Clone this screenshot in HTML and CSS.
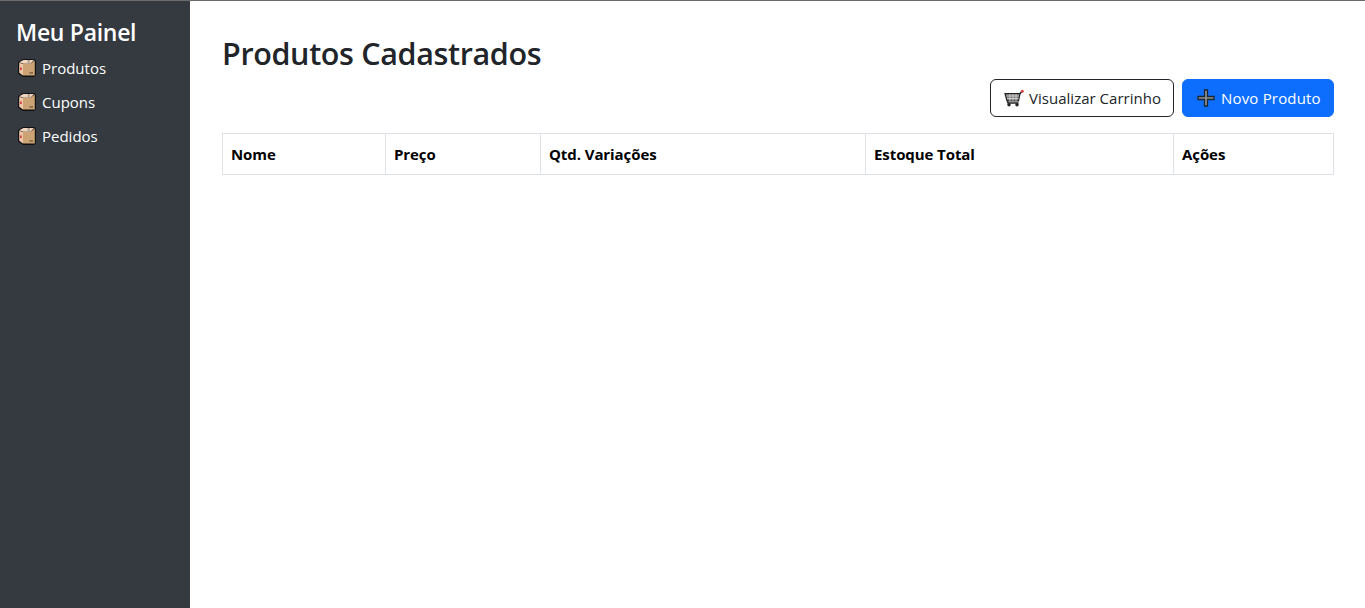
FILE: index.html
```html
<!DOCTYPE html>
<html lang="pt-BR">
<head>
<meta charset="utf-8">
<title>Meu Painel</title>
<link rel="stylesheet" href="styles.css">
</head>
<body>
<div class="shell">
  <aside class="sidebar">
    <h1 class="brand">Meu Painel</h1>
    <nav class="nav">
      <a class="nav-link" href="#"><svg class="box-icon" viewBox="0 0 18 18"><use href="#box"/></svg>Produtos</a>
      <a class="nav-link" href="#"><svg class="box-icon" viewBox="0 0 18 18"><use href="#box"/></svg>Cupons</a>
      <a class="nav-link" href="#"><svg class="box-icon" viewBox="0 0 18 18"><use href="#box"/></svg>Pedidos</a>
    </nav>
  </aside>
  <main class="content">
    <h2 class="title">Produtos Cadastrados</h2>
    <div class="actions">
      <a class="btn btn-outline" href="#">
        <svg class="btn-icon" viewBox="0 0 20 18">
          <path d="M15.500 5 18 2.500" stroke="#333" stroke-width="1.600" fill="none"/>
          <circle cx="18.300" cy="2.200" r="1.500" fill="#d8433f"/>
          <path d="M1 4.500H16L14.500 12H3Z" fill="#777" stroke="#222" stroke-width="1.200"/>
          <path d="M2.500 7H15M3 9.500H14.500M6 5V12M9 5V12M12 5V12" stroke="#ddd" stroke-width=".8"/>
          <path d="M3.500 12 4 14H14.500" stroke="#222" stroke-width="1.400" fill="none"/>
          <circle cx="5" cy="15.800" r="1.700" fill="#222"/>
          <circle cx="13" cy="15.800" r="1.700" fill="#222"/>
        </svg>
        Visualizar Carrinho
      </a>
      <a class="btn btn-primary" href="#">
        <svg class="btn-icon" viewBox="0 0 18 18">
          <path d="M7.500 1h3v6.500h6.500v3h-6.500v6.500h-3v-6.500h-6.500v-3h6.500z" fill="#8f9295" stroke="#1b2733" stroke-width="1.300"/>
        </svg>
        Novo Produto
      </a>
    </div>
    <table class="table">
      <colgroup>
        <col class="col-nome"><col class="col-preco"><col class="col-qtd"><col class="col-estoque"><col class="col-acoes">
      </colgroup>
      <thead>
        <tr><th>Nome</th><th>Preço</th><th>Qtd. Variações</th><th>Estoque Total</th><th>Ações</th></tr>
      </thead>
    </table>
  </main>
</div>
<svg class="defs" aria-hidden="true">
  <symbol id="box" viewBox="0 0 18 18">
    <path d="M0 3 5 0H16.500L18 2V16L16 18H5L0 14.500Z" fill="#111"/>
    <path d="M1.200 3.300 5.500 1H16L12.500 4.800H5.500Z" fill="#f3d6bf"/>
    <path d="M1.200 3.800 5 5V16.500L1.200 13.800Z" fill="#ecc7ab"/>
    <path d="M5 4.800H12.500L16.800 1.500V16.500H5Z" fill="#cba374"/>
    <path d="M2 8.500h1.800v2.500h-1.800z" fill="#d8433f"/>
    <path d="M11.500 13h3.500v1.800h-3.500z" fill="#8a6d4b"/>
    <path d="M9.500 1h2.500v3.500h-2.500z" fill="#b5a797"/>
  </symbol>
</svg>
</body>
</html>
```
FILE: styles.css
```css
* { box-sizing: border-box; }
html, body { height: 100%; }
body {
  margin: 0;
  background: #fff;
  color: #212529;
  font-family: "Open Sans", "Noto Sans", "Liberation Sans", sans-serif;
  font-size: 16px;
  line-height: 1.5;
  border-top: 1px solid #6b6b6b;
}
.shell { display: flex; height: 607px; }
.sidebar {
  width: 190px;
  flex: none;
  background: #343a40;
  color: #fff;
  padding: 15px 16px 16px;
}
.brand { margin: 0; font-size: 23px; font-weight: 600; line-height: 32px; letter-spacing: -0.3px; }
.nav { display: flex; flex-direction: column; margin-top: 3px; }
.nav-link {
  display: flex;
  align-items: center;
  height: 34px;
  gap: 6px;
  color: #fff;
  text-decoration: none;
  font-size: 15px;
  letter-spacing: 0;
}
.box-icon { width: 18px; height: 18px; margin-left: 2px; flex: none; }
.content { flex: 1; padding: 32px 31px 0 32px; min-width: 0; }
.title { margin: 0 0 6px; font-size: 30.5px; font-weight: 600; line-height: 40px; letter-spacing: -0.35px; }
.actions { display: flex; justify-content: flex-end; gap: 8px; margin-bottom: 16px; }
.btn {
  display: flex;
  align-items: center;
  gap: 5px;
  height: 38px;
  padding: 0 12px;
  border: 1px solid;
  border-radius: 6px;
  text-decoration: none;
  font-size: 15px;
  white-space: nowrap;
}
.btn-outline { width: 184px; border-color: #212529; color: #212529; background: #fff; padding-left: 13px; letter-spacing: 0.02px; }
.btn-primary { width: 152px; border-color: #0d6efd; color: #fff; background: #0d6efd; padding-left: 13px; letter-spacing: 0.18px; }
.btn-icon { width: 20px; height: 18px; flex: none; }
.table { width: 100%; table-layout: fixed; border-collapse: collapse; color: #000; }
.table th {
  height: 41px;
  padding: 0 8px;
  border: 1px solid #dee2e6;
  text-align: left;
  font-size: 15px;
  font-weight: 700;
  letter-spacing: -0.08px;
}
.col-nome { width: 163px; }
.col-preco { width: 155px; }
.col-qtd { width: 325px; }
.col-estoque { width: 308px; }
.col-acoes { width: 160px; }
.defs { position: absolute; width: 0; height: 0; }
```
